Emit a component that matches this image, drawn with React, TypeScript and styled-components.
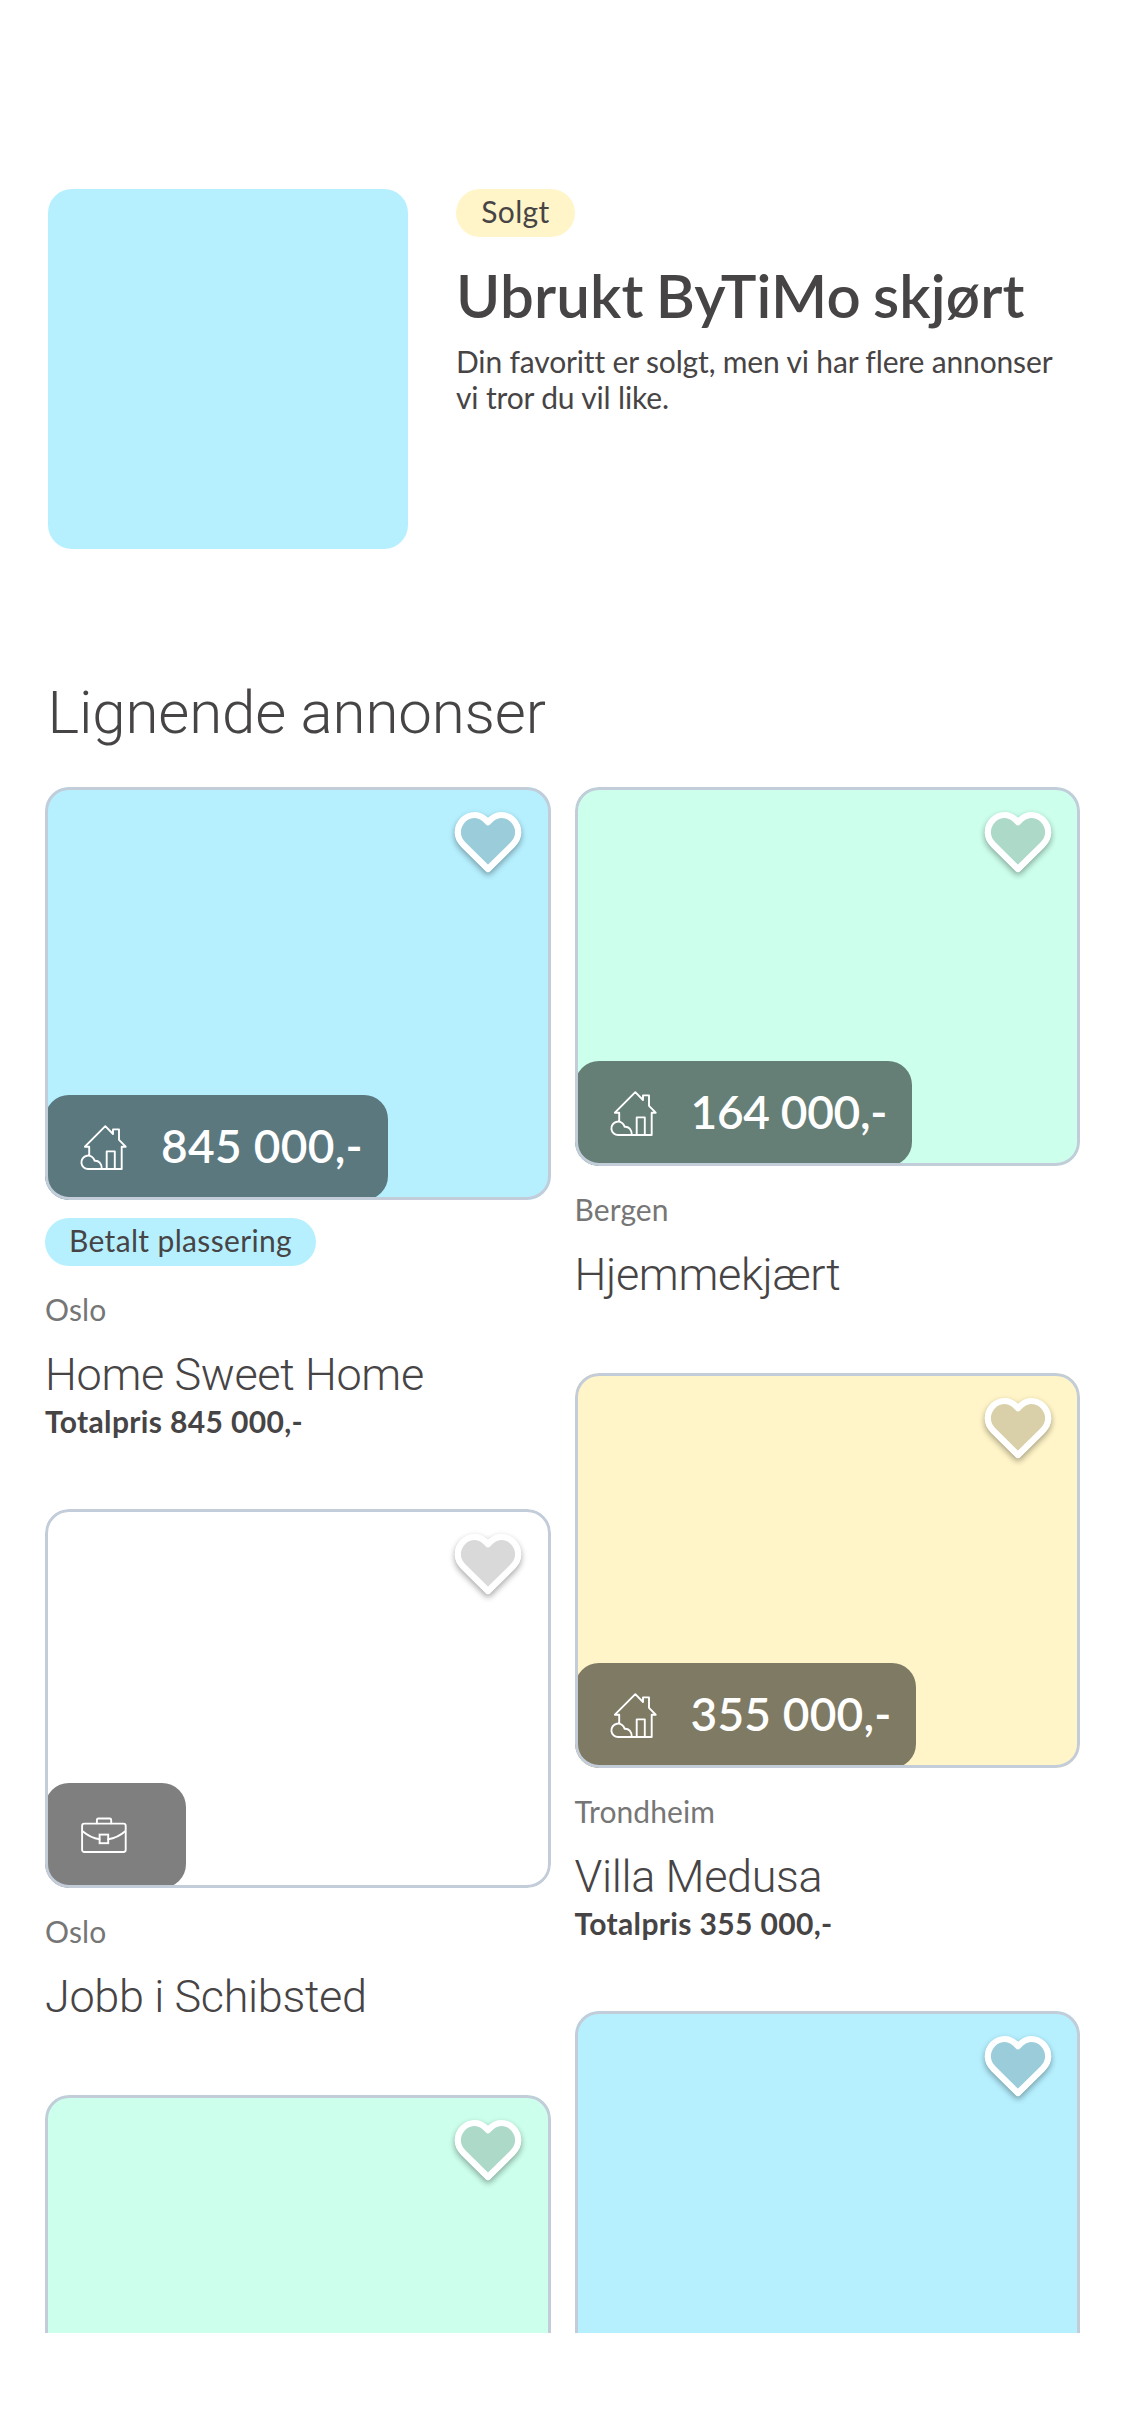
import React, { useId } from "react";
import styled, { createGlobalStyle } from "styled-components";

const palette = {
  ice: "#b6f0ff",
  mint: "#ccffec",
  banana: "#fff5c8",
  milk: "#ffffff",
  ink: "#474445",
  stone: "#767676",
  border: "#c3ccd9",
};

const textFont = `Lato, "Open Sans", sans-serif`;
const lightFont = `Roboto, "Open Sans", sans-serif`;

const GlobalStyle = createGlobalStyle`
  * { box-sizing: border-box; }
  body { margin: 0; background: #fff; color: ${palette.ink}; font-family: ${textFont}; }
  h1, h2, h3, p { margin: 0; font-weight: 400; }
`;

const Page = styled.main`
  width: 1125px;
  height: 2436px;
  padding-top: 189px;
  overflow: hidden;
  background: #fff;
`;

const Hero = styled.section`
  display: flex;
  gap: 48px;
  padding: 0 48px;
`;

const HeroImage = styled.div`
  flex: none;
  width: 360px;
  height: 360px;
  border-radius: 24px;
  background: ${palette.ice};
`;

const HeroText = styled.div`
  display: flex;
  flex-direction: column;
  align-items: flex-start;
`;

const Chip = styled.span<{ $color: string; $width: number }>`
  display: flex;
  justify-content: center;
  width: ${(p) => p.$width}px;
  height: 48px;
  border-radius: 24px;
  background: ${(p) => p.$color};
  font-size: 30px;
  line-height: 45px;
  letter-spacing: 0.35px;
  white-space: nowrap;
`;

const HeroTitle = styled.h1`
  margin-top: 22px;
  font-size: 60px;
  font-weight: 600;
  line-height: 72px;
  letter-spacing: 0.15px;
  word-spacing: -3px;
  white-space: nowrap;
`;

const HeroBody = styled.p`
  margin-top: 12px;
  width: 615px;
  font-size: 30px;
  line-height: 36px;
  letter-spacing: -0.15px;
`;

const SectionTitle = styled.h2`
  margin: 128px 0 38px 47.5px;
  font-family: ${lightFont};
  font-size: 60px;
  font-weight: 300;
  line-height: 72px;
  letter-spacing: -0.15px;
`;

const Feed = styled.section`
  display: grid;
  grid-template-columns: 505.5px 505.5px;
  gap: 24px;
  height: 1546px;
  padding-left: 45px;
  overflow: hidden;
`;

const Column = styled.div`
  display: flex;
  flex-direction: column;
`;

const Ad = styled.article`
  flex: none;
`;

const AdImage = styled.div<{ $color: string; $height: number }>`
  position: relative;
  display: flex;
  align-items: flex-end;
  height: ${(p) => p.$height}px;
  border-radius: 24px;
  background: ${(p) => p.$color};
  overflow: hidden;

  &::after {
    content: "";
    position: absolute;
    inset: 0;
    border: 3px solid ${palette.border};
    border-radius: 24px;
  }
`;

const FavoriteButton = styled.button`
  position: absolute;
  top: 10.5px;
  right: 17.5px;
  width: 90px;
  height: 90px;
  padding: 0;
  border: 0;
  background: none;

  svg {
    display: block;
  }
`;

const Badge = styled.div<{ $width: number }>`
  display: flex;
  align-items: center;
  gap: 35px;
  width: ${(p) => p.$width}px;
  height: 105px;
  padding-left: 36px;
  border-radius: 24px;
  background: rgba(0, 0, 0, 0.5);
  color: #fff;

  svg {
    flex: none;
  }
`;

const Price = styled.span<{ $tracking: number }>`
  padding-bottom: 4px;
  font-size: 46px;
  font-weight: 600;
  line-height: 56px;
  letter-spacing: ${(p) => p.$tracking}px;
  white-space: nowrap;
`;

const AdChip = styled.div`
  margin-top: 18px;
`;

const AdInfo = styled.div`
  padding: 25px 0 71.5px;
`;

const Location = styled.p`
  color: ${palette.stone};
  font-size: 30px;
  line-height: 36px;
  letter-spacing: 0.1px;
`;

const AdTitle = styled.h3`
  margin-top: 20.5px;
  font-family: ${lightFont};
  font-size: 45px;
  font-weight: 300;
  line-height: 54px;
  letter-spacing: -0.35px;
  white-space: nowrap;
`;

const Total = styled.p`
  margin-top: 2px;
  font-size: 30px;
  font-weight: 700;
  line-height: 34px;
  letter-spacing: 0.35px;
`;

const heartPath =
  "M45 71 L20.4 46.7 C16.7 43 14.8 39.3 14.8 34.6 C14.8 24.8 22.4 17 32 17 C37.2 17 40.8 19.6 45 24.2 C49.2 19.6 52.8 17 58 17 C67.6 17 75.2 24.8 75.2 34.6 C75.2 39.3 73.3 43 69.6 46.7 Z";

/* The shadow is knocked out beneath the heart so its translucent fill stays even. */
const Heart = () => {
  const id = useId();
  return (
    <svg width="90" height="90" viewBox="0 0 90 90">
      <defs>
        <filter id={id} x="0" y="0" width="90" height="90" filterUnits="userSpaceOnUse">
          <feGaussianBlur in="SourceAlpha" stdDeviation="3" />
          <feOffset dy="3" result="shadow" />
          <feComposite in="shadow" in2="SourceAlpha" operator="out" />
        </filter>
      </defs>
      <g opacity="0.36" filter={`url(#${id})`}>
        <path d={heartPath} fill="#000" stroke="#000" strokeWidth="6" strokeLinejoin="round" />
      </g>
      <path d={heartPath} fill="#000" fillOpacity="0.15" />
      <path d={heartPath} fill="none" stroke="#fff" strokeWidth="6.2" strokeLinejoin="round" />
    </svg>
  );
};

const iconStroke = {
  width: 45,
  height: 45,
  viewBox: "0 0 45 45",
  fill: "none",
  stroke: "#fff",
  strokeWidth: 1.9,
  strokeLinejoin: "round" as const,
  strokeLinecap: "round" as const,
  overflow: "visible",
};

const House = () => (
  <svg {...iconStroke}>
    <path d="M8.2 30.5 V21.7 H3.9 L24.3 1.2 L32 9 V4.4 H38 V14.8 L44.7 21.7 H40.7 V44 H7.5 A6.7 6.7 0 1 1 13.6 35.8 C17.8 35.4 20.7 38.6 20.7 43.6" />
    <path d="M25.7 43.6 V26.4 H33.8 V43.6" />
  </svg>
);

const Briefcase = () => (
  <svg {...iconStroke}>
    <rect x="1.1" y="10.6" width="43.6" height="28.4" rx="2.2" />
    <path d="M15.9 10.3 V7 Q15.9 5.5 17.4 5.5 H28.7 Q30.2 5.5 30.2 7 V10.3" />
    <path d="M1.6 18.3 Q9.5 25 18.5 26.3 M27.2 26.3 Q36.5 25 44.2 18.3" />
    <rect x="18.6" y="21.6" width="8.6" height="8.6" strokeLinejoin="miter" />
  </svg>
);

type AdData = {
  color: string;
  height: number;
  icon?: "house" | "briefcase";
  badgeWidth?: number;
  price?: string;
  tracking?: number;
  sponsored?: boolean;
  location?: string;
  title?: string;
  total?: string;
};

const leftAds: AdData[] = [
  { color: palette.ice, height: 413, icon: "house", badgeWidth: 343, price: "845 000,-", tracking: 0.3, sponsored: true, location: "Oslo", title: "Home Sweet Home", total: "Totalpris 845 000,-" },
  { color: palette.milk, height: 379, icon: "briefcase", badgeWidth: 141, location: "Oslo", title: "Jobb i Schibsted" },
  { color: palette.mint, height: 420 },
];

const rightAds: AdData[] = [
  { color: palette.mint, height: 379, icon: "house", badgeWidth: 337.5, price: "164 000,-", tracking: -0.3, location: "Bergen", title: "Hjemmekjært" },
  { color: palette.banana, height: 395, icon: "house", badgeWidth: 341.5, price: "355 000,-", tracking: 0.2, location: "Trondheim", title: "Villa Medusa", total: "Totalpris 355 000,-" },
  { color: palette.ice, height: 420 },
];

const AdCard = ({ ad }: { ad: AdData }) => (
  <Ad>
    <AdImage $color={ad.color} $height={ad.height}>
      {ad.icon && (
        <Badge $width={ad.badgeWidth ?? 141}>
          {ad.icon === "house" ? <House /> : <Briefcase />}
          {ad.price && <Price $tracking={ad.tracking ?? 0}>{ad.price}</Price>}
        </Badge>
      )}
      <FavoriteButton aria-label="Favoritt">
        <Heart />
      </FavoriteButton>
    </AdImage>
    {ad.sponsored && (
      <AdChip>
        <Chip $color={palette.ice} $width={271}>Betalt plassering</Chip>
      </AdChip>
    )}
    {ad.title && (
      <AdInfo>
        <Location>{ad.location}</Location>
        <AdTitle>{ad.title}</AdTitle>
        {ad.total && <Total>{ad.total}</Total>}
      </AdInfo>
    )}
  </Ad>
);

export default function App() {
  return (
    <Page>
      <GlobalStyle />
      <Hero>
        <HeroImage />
        <HeroText>
          <Chip $color={palette.banana} $width={119}>Solgt</Chip>
          <HeroTitle>Ubrukt ByTiMo skjørt</HeroTitle>
          <HeroBody>Din favoritt er solgt, men vi har flere annonser vi tror du vil like.</HeroBody>
        </HeroText>
      </Hero>
      <SectionTitle>Lignende annonser</SectionTitle>
      <Feed>
        <Column>{leftAds.map((ad, i) => <AdCard key={i} ad={ad} />)}</Column>
        <Column>{rightAds.map((ad, i) => <AdCard key={i} ad={ad} />)}</Column>
      </Feed>
    </Page>
  );
}
